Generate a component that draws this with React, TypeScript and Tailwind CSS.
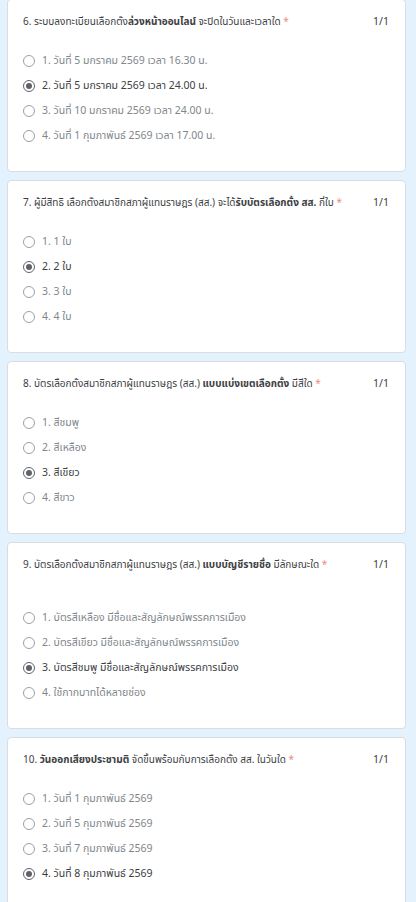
type Option = { label: string; checked?: boolean };

type Question = {
  title: React.ReactNode;
  options: Option[];
  extraGap?: boolean;
};

const questions: Question[] = [
  {
    title: (
      <>
        6. ระบบลงทะเบียนเลือกตั้ง<b className="font-bold">ล่วงหน้าออนไลน์</b> จะปิดในวันและเวลาใด
      </>
    ),
    options: [
      { label: "1. วันที่ 5 มกราคม 2569 เวลา 16.30 น." },
      { label: "2. วันที่ 5 มกราคม 2569 เวลา 24.00 น.", checked: true },
      { label: "3. วันที่ 10 มกราคม 2569 เวลา 24.00 น." },
      { label: "4. วันที่ 1 กุมภาพันธ์ 2569 เวลา 17.00 น." },
    ],
  },
  {
    title: (
      <>
        7. ผู้มีสิทธิ เลือกตั้งสมาชิกสภาผู้แทนราษฎร (สส.) จะได้<b className="font-bold">รับบัตรเลือกตั้ง สส.</b> กี่ใบ
      </>
    ),
    options: [
      { label: "1. 1 ใบ" },
      { label: "2. 2 ใบ", checked: true },
      { label: "3. 3 ใบ" },
      { label: "4. 4 ใบ" },
    ],
  },
  {
    title: (
      <>
        8. บัตรเลือกตั้งสมาชิกสภาผู้แทนราษฎร (สส.) <b className="font-bold">แบบแบ่งเขตเลือกตั้ง</b> มีสีใด
      </>
    ),
    options: [
      { label: "1. สีชมพู" },
      { label: "2. สีเหลือง" },
      { label: "3. สีเขียว", checked: true },
      { label: "4. สีขาว" },
    ],
  },
  {
    title: (
      <>
        9. บัตรเลือกตั้งสมาชิกสภาผู้แทนราษฎร (สส.) <b className="font-bold">แบบบัญชีรายชื่อ</b> มีลักษณะใด
      </>
    ),
    extraGap: true,
    options: [
      { label: "1. บัตรสีเหลือง มีชื่อและสัญลักษณ์พรรคการเมือง" },
      { label: "2. บัตรสีเขียว มีชื่อและสัญลักษณ์พรรคการเมือง" },
      { label: "3. บัตรสีชมพู มีชื่อและสัญลักษณ์พรรคการเมือง", checked: true },
      { label: "4. ใช้กากบาทได้หลายช่อง" },
    ],
  },
  {
    title: (
      <>
        10. <b className="font-bold">วันออกเสียงประชามติ</b> จัดขึ้นพร้อมกับการเลือกตั้ง สส. ในวันใด
      </>
    ),
    options: [
      { label: "1. วันที่ 1 กุมภาพันธ์ 2569" },
      { label: "2. วันที่ 5 กุมภาพันธ์ 2569" },
      { label: "3. วันที่ 7 กุมภาพันธ์ 2569" },
      { label: "4. วันที่ 8 กุมภาพันธ์ 2569", checked: true },
    ],
  },
];

function Radio({ checked }: { checked?: boolean }) {
  return (
    <span
      className={`flex h-[12px] w-[12px] shrink-0 items-center justify-center rounded-full border ${
        checked ? "border-[#5f6368]" : "border-[#9aa0a6]"
      }`}
    >
      {checked && <span className="h-[6px] w-[6px] rounded-full bg-[#5f6368]" />}
    </span>
  );
}

function QuestionCard({ q }: { q: Question }) {
  return (
    <div className="rounded-[4px] border border-[#dadce0] bg-white pl-[15px] pr-[16px] pt-[14px] pb-[27px]">
      {/* Header */}
      <div className="flex items-start justify-between">
        <p className="text-[10px] leading-[16px] text-[#3c4043]">
          {q.title} <span className="text-[#ee8a84]">*</span>
        </p>
        <span className="ml-2 shrink-0 text-[10.5px] leading-[16px] text-[#3c4043]">1/1</span>
      </div>

      {/* Options */}
      <div className={`flex flex-col gap-[9px] ${q.extraGap ? "mt-[37px]" : "mt-[23px]"}`}>
        {q.options.map((o) => (
          <div key={o.label} className="flex h-[16px] items-center gap-[7px]">
            <Radio checked={o.checked} />
            <span
              className={`text-[10.5px] leading-[16px] ${
                o.checked ? "text-[#3c4043]" : "text-[#80868b]"
              }`}
            >
              {o.label}
            </span>
          </div>
        ))}
      </div>
    </div>
  );
}

export default function App() {
  return (
    <div
      className="min-h-[902px] bg-[#e3f2fc] px-[7px] pb-4"
      style={{ fontFamily: '"Noto Sans Thai", "Noto Sans", Roboto, sans-serif' }}
    >
      <div className="-mt-px flex w-[399px] flex-col gap-[8px]">
        {questions.map((q, i) => (
          <QuestionCard key={i} q={q} />
        ))}
      </div>
    </div>
  );
}
